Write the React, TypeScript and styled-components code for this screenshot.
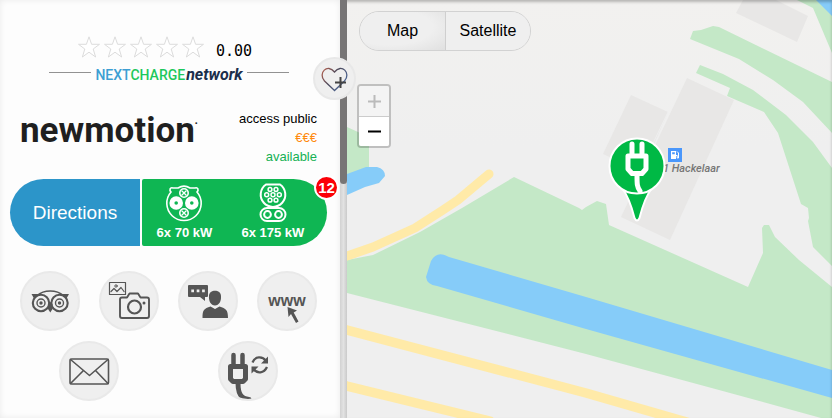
import React from "react";
import styled, { createGlobalStyle } from "styled-components";

const GlobalStyle = createGlobalStyle`
  *, *::before, *::after { box-sizing: border-box; }
  html, body, #root { height: 100%; margin: 0; }
  body { font-family: "Liberation Sans", Arial, sans-serif; overflow: hidden; }
  button { font: inherit; color: inherit; border: 0; padding: 0; margin: 0; cursor: pointer; }
  svg { display: block; }
`;

const Page = styled.div`
  position: relative;
  display: grid;
  grid-template-columns: 347px minmax(0, 1fr);
  height: 100vh;
  &::after {
    content: "";
    position: absolute;
    inset: 0;
    box-shadow: inset 0 2px 3px rgba(0, 0, 0, 0.25);
    pointer-events: none;
  }
`;

const Sidebar = styled.aside`
  position: relative;
  z-index: 1;
  display: grid;
  grid-template-columns: minmax(0, 1fr) 7px;
  min-height: 0;
  background: #fdfdfd;
`;

const Panel = styled.div`
  min-height: 0;
  overflow: hidden;
  padding: 36px 13px 0 10px;
  box-shadow: inset 0 0 6px rgba(0, 0, 0, 0.08);
`;

const ScrollTrack = styled.div`
  background: linear-gradient(90deg, #d2d2d2, #e2e2e2 50%, #cacaca);
`;

const ScrollThumb = styled.div`
  height: 44%;
  border-radius: 0 0 4px 4px;
  background: #777575;
`;

const Rating = styled.div`
  display: flex;
  align-items: flex-start;
  gap: 4px;
  height: 28px;
  padding-left: 68px;
`;

const Score = styled.span`
  margin: 4px 0 0 8px;
  font: 15px/22px "DejaVu Sans Mono", monospace;
  color: #000;
`;

const Network = styled.div`
  display: flex;
  align-items: flex-start;
  justify-content: center;
  gap: 4px;
  padding: 0 38px 0 39px;
  height: 20px;
  &::before, &::after {
    content: "";
    flex: 1;
    height: 1px;
    margin-top: 8px;
    background: #929292;
  }
`;

const NetworkName = styled.span`
  font: 500 14px/22px Roboto, sans-serif;
  color: #3d9fd3;
  white-space: nowrap;
`;
const Charge = styled.span`color: #1dc85c;`;
const NetworkWord = styled.em`
  margin-left: 1px;
  font-size: 16px;
  font-weight: 700;
  color: #1b2e4b;
`;

const Summary = styled.div`
  display: flex;
  justify-content: space-between;
  padding: 25px 10px 0;
  height: 95px;
`;

const Brand = styled.div`
  display: flex;
  font: 700 35px/43px Roboto, sans-serif;
  color: #1f1f1f;
`;
const Mark = styled.small`
  font-size: 8px;
  line-height: 30px;
`;

const Facts = styled.div`
  font-size: 13px;
  line-height: 19px;
  text-align: right;
`;
const Fact = styled.div<{ $color: string }>`color: ${(p) => p.$color};`;

const Actions = styled.div`
  position: relative;
  display: flex;
  gap: 2px;
  height: 67px;
`;

const Directions = styled.button`
  flex: 0 0 130px;
  border-radius: 34px 0 0 34px;
  background: #2c95c9;
  color: #fff;
  font-size: 19px;
`;

const Plugs = styled.button`
  flex: 1;
  display: flex;
  justify-content: space-around;
  padding: 4px 8px 0 0;
  border-radius: 2px 34px 34px 2px;
  background: #0fb653;
  color: #fff;
`;

const Plug = styled.span`
  display: flex;
  flex-direction: column;
  align-items: center;
  font-size: 13px;
  font-weight: 700;
  line-height: 20px;
  white-space: nowrap;
`;

const Badge = styled.span`
  position: absolute;
  top: -4px;
  right: -12px;
  width: 25px;
  height: 25px;
  border: 2px solid #fff;
  border-radius: 50%;
  background: #fb0007;
  color: #fff;
  font-size: 15px;
  font-weight: 700;
  line-height: 21px;
  text-align: center;
`;

const Links = styled.nav<{ $top: number }>`
  display: flex;
  justify-content: space-around;
  padding-top: ${(p) => p.$top}px;
`;

const RoundButton = styled.button`
  width: 60px;
  height: 60px;
  border: 2px solid #e9e9e9;
  border-radius: 50%;
  background: #efefef;
  color: #555;
  overflow: hidden;
  svg { width: 56px; height: 56px; }
`;

const Favourite = styled.button`
  position: absolute;
  top: 57px;
  right: -9px;
  width: 43px;
  height: 43px;
  border: 2px solid #e8e8e8;
  border-radius: 50%;
  background: #efefef;
  svg { width: 39px; height: 39px; }
`;

const MapArea = styled.main`
  position: relative;
  min-width: 0;
  overflow: hidden;
  background: #efefef;
`;

const Terrain = styled.svg`
  position: absolute;
  inset: 0;
  width: 100%;
  height: 100%;
`;

const MapControls = styled.div`
  position: absolute;
  top: 11px;
  left: 12px;
  display: flex;
  flex-direction: column;
  align-items: flex-start;
  gap: 33px;
`;

const MapTypes = styled.div`
  display: flex;
  height: 40px;
  border: 1px solid #d2d2d2;
  border-radius: 20px;
  overflow: hidden;
  background: #efefef;
`;

const MapType = styled.button<{ $active?: boolean }>`
  width: 85px;
  background: ${(p) => (p.$active ? "radial-gradient(ellipse at 35% 40%, #efefef 55%, #e0e0e0)" : "#efefef")};
  font-size: 16px;
  color: #000;
  & + & { border-left: 1px solid #cfcfcf; }
`;

const Zoom = styled.div`
  display: grid;
  width: 34px;
  margin-left: -2px;
  border: 2px solid rgba(0, 0, 0, 0.2);
  border-radius: 4px;
  background-clip: padding-box;
  overflow: hidden;
`;

const ZoomButton = styled.button`
  display: grid;
  place-items: center;
  height: 30px;
  background: #fff;
  color: #000;
  & + & { border-top: 1px solid #ccc; }
  &:disabled { background: #f4f4f4; color: #bbb; }
`;

const Pin = styled.button`
  position: absolute;
  top: 136px;
  left: 261px;
  background: none;
`;

const Place = styled.div`
  position: absolute;
  top: 148px;
  left: 316px;
  font: italic 500 11px/15px Roboto, sans-serif;
  color: #777;
  white-space: nowrap;
  svg { margin: 0 0 -1px 5px; }
`;

const stroke = { fill: "none", stroke: "currentColor", strokeLinecap: "round", strokeLinejoin: "round" } as const;

const Star = () => (
  <svg width="22" height="23" viewBox="0 0 22 23" aria-hidden="true">
    <path d="M11 .8 13.6 8.3H21.5L15.2 13 17.6 21 11 16.2 4.4 21 6.8 13 .5 8.3H8.4Z" fill="#fff" stroke="#dcdcdc" />
  </svg>
);

const CombinedRound = () => (
  <svg width="38" height="40" viewBox="0 0 38 40" fill="none" stroke="#fff" strokeWidth="1.6">
    <path d="M6 9C4 7 5 4 8 5L13 5C17 2.500 21 2.500 25 5L30 5C33 4 34 7 32 9A17.200 17.200 0 1 1 6 9Z" />
    <circle cx="19" cy="10" r="4.2" /><circle cx="19" cy="30" r="4.2" />
    <path d="m16.500 7.500 5 5m0-5-5 5m0 15 5 5m0-5-5 5" strokeWidth="1.3" />
    <circle cx="11.2" cy="20" r="4.300" strokeWidth="5" /><circle cx="26.8" cy="20" r="4.300" strokeWidth="5" />
  </svg>
);

const CombinedTall = () => (
  <svg width="38" height="40" viewBox="0 0 38 40" fill="none" stroke="#fff" strokeWidth="2">
    <path d="M12 1.500H26A12.300 12.300 0 1 1 12 1.500Z" />
    <rect x="6.500" y="25" width="25" height="13" rx="6.500" />
    <circle cx="13.500" cy="31.500" r="3.400" /><circle cx="24.500" cy="31.500" r="3.400" />
    <g strokeWidth="1.500">
      <circle cx="16" cy="6.500" r="1.900" /><circle cx="22" cy="6.500" r="1.900" />
      <circle cx="12.700" cy="11.800" r="2" /><circle cx="19" cy="11.800" r="2" /><circle cx="25.300" cy="11.800" r="2" />
      <circle cx="16" cy="17.200" r="1.900" /><circle cx="22" cy="17.200" r="1.900" />
    </g>
  </svg>
);

const Owl = () => (
  <svg viewBox="2 2 56 56">
    <g {...stroke} strokeWidth="2.100">
      <circle cx="21" cy="32" r="8.200" /><circle cx="39.500" cy="32" r="8.200" />
      <circle cx="21" cy="32" r="4" strokeWidth="1.400" /><circle cx="39.500" cy="32" r="4" strokeWidth="1.400" />
      <path d="M17 24.500C24 18.500 36.500 18.500 43.500 24.500" strokeWidth="1.500" />
    </g>
    <g fill="currentColor">
      <circle cx="21" cy="32" r="1.700" /><circle cx="39.500" cy="32" r="1.700" />
      <path d="M11.500 23H19L14 27.500ZM49 23H41.500L46.500 27.500ZM28 33 30.300 31 32.500 33 32.500 38 30.300 41.500 28 38Z" />
    </g>
  </svg>
);

const Photos = () => (
  <svg viewBox="2 2 56 56">
    <g {...stroke}>
      <path d="M10.500 11.500h16v12h-16ZM12 20.500l3-3 3 3 4-4 3 4" strokeWidth="1.200" />
      <circle cx="17" cy="15" r="1.200" strokeWidth="1" />
      <path d="M23 26.500H28L30.500 22.500H39L41.500 26.500H48Q50 26.500 50 28.500V45Q50 47 48 47H23Q21 47 21 45V28.500Q21 26.500 23 26.500Z" strokeWidth="1.900" />
      <circle cx="35.500" cy="36" r="6.500" strokeWidth="2.200" />
    </g>
    <circle cx="45" cy="32" r="1.500" fill="currentColor" />
  </svg>
);

const Chat = () => (
  <svg viewBox="2 2 56 56" fill="currentColor">
    <path fillRule="evenodd" d="M11 14H29Q30 14 30 15V25Q30 26 29 26H27V30L22 26H11Q10 26 10 25V15Q10 14 11 14ZM13.300 18.500v2.700h2.700v-2.700Zm5.400 0v2.700h2.700v-2.700Zm5.400 0v2.700h2.700v-2.700Z" />
    <path d="M31 25C31 18 43 18 43 25C43.500 30 41 34.500 37 34.500S30.500 30 31 25ZM24.500 47C24.500 39 26 37.500 32.500 35.500L37 38 41.500 35.500C48 37.500 50 39 50 47Z" />
  </svg>
);

const Website = () => (
  <svg viewBox="2 2 56 56" fill="currentColor">
    <text x="30" y="35" textAnchor="middle" fontFamily="Liberation Sans" fontWeight="700" fontSize="16">www</text>
    <path d="M30.500 36 40 39.500 36.700 41.500 41.500 50.500 39 52 34 43 31.500 46Z" />
  </svg>
);

const Mail = () => (
  <svg viewBox="2 2 56 56">
    <g {...stroke} strokeWidth="1.600">
      <rect x="11" y="18" width="38.500" height="25" rx="1.500" />
      <path d="M11.500 18.500 30.500 34.500 49 18.500M11.500 42.500 24.500 29.500M49 42.500 36.500 29.500" />
    </g>
  </svg>
);

const PlugRefresh = () => (
  <svg viewBox="2 2 56 56">
    <g {...stroke} strokeWidth="5">
      <path d="M15.500 14V24M24.500 14V24" strokeWidth="4.500" />
      <path d="M12.500 25.500H27.500V38L25 40.500H15L12.500 38Z" />
      <path d="M20 42C20 53 23 58 31 58.500" />
    </g>
    <g {...stroke} strokeWidth="2.300" strokeLinecap="butt">
      <path d="M34.500 21.500C37 15 44.500 15 48 20M49 26C46 32.500 39 33 35.500 28" />
    </g>
    <path d="M50 15.500V22.500H43ZM33.500 32.500V25.500H40.500Z" fill="currentColor" />
  </svg>
);

const HeartPlus = () => (
  <svg viewBox="0 0 39 39">
    <defs>
      <linearGradient id="heart" x1="0" x2="1" y1="0" y2="0.6">
        <stop offset="0" stopColor="#b5604e" /><stop offset="0.500" stopColor="#4d4a5c" /><stop offset="1" stopColor="#4a6698" />
      </linearGradient>
    </defs>
    <path d="M19.500 31.500 9.500 22C2.500 14 12.500 4 19.500 13 26.500 4 36.500 14 29.500 22Z" fill="none" stroke="url(#heart)" strokeWidth="1.300" />
    <path d="M25.500 18v11M20 23.500h11" stroke="#444" strokeWidth="2" />
  </svg>
);

const Landscape = () => (
  <Terrain viewBox="347 0 485 418" preserveAspectRatio="xMidYMid slice" aria-hidden="true">
    <defs>
      <linearGradient id="haze" x1="0" y1="0" x2="0" y2="1">
        <stop offset="0" stopColor="#f2f1ef" /><stop offset="0.350" stopColor="#efefef" />
      </linearGradient>
    </defs>
    <rect x="347" width="485" height="418" fill="url(#haze)" />
    <g fill="#e8e7e6">
      <path d="M743 0H776L808 16 797 42 736 13Z" />
      <path d="M631 95 668 112 642 172 603 154Z" />
      <path d="M687 78 734 100 670 240 621 217Z" />
    </g>
    <path d="M668 112 645 160" stroke="#efefef" />
    <g fill="#c4e8c7">
      <path d="M347 127 369 137V167L347 176Z" />
      <path d="M514 177 579 208 582 210 586 207 597 201 606 204 609 225 748 287 763 253 762 228 764 225H769L775 237 799 260 832 287V421L719 390 586 354 347 293V260L373 255 420 232 462 208Z" />
      <path d="M690 39 693 31 701 30 713 26 719 27 832 82V133L803 102 773 80 739 59Z" />
      <path d="M696 73 700 65 723 74 753 90 786 115 813 142 832 168V266L813 247 808 221 809 218 808 208 801 204 778 133 764 112 727 96 730 88Z" />
      <path d="M797 0H832V53L813 8Z" />
    </g>
    <g fill="#86ccf9">
      <path d="M816 0H832V16Z" />
      <path d="M347 174 366 167H377Q385 169 385 176L379 183 365 187 347 195Z" />
      <path d="M449 257 586 297 832 370V398L586 329 437 286Q427 285 426 277L431 261Q437 250 449 257Z" />
    </g>
    <g fill="none" stroke="#ffeaa8" strokeWidth="9" strokeLinecap="round" strokeLinejoin="round">
      <path d="M340 258 347 256 373 247 415 228 443 210 458 200 489 174" />
      <path d="M340 328 347 330 586 393 690 423M340 384 347 386 490 421" strokeWidth="9.500" />
    </g>
  </Terrain>
);

const PinDrawing = () => (
  <svg width="58" height="86" viewBox="0 0 58 86">
    <path d="M14 52C21 61 24 72 26.500 82Q29 87 31.500 82C34 72 37 61 44 52Z" fill="#00b945" stroke="#fff" strokeWidth="2" strokeLinejoin="round" />
    <circle cx="29" cy="30" r="27.500" fill="#00b945" stroke="#fff" strokeWidth="2" />
    <g fill="none" stroke="#fff" strokeWidth="5" strokeLinecap="round" strokeLinejoin="round">
      <path d="M24 8V18M34 8V18" />
      <path d="M20 20H38V33L34 37.500H24L20 33Z" />
      <path d="M29 39C29 48 29 51 32 55" />
    </g>
  </svg>
);

export default function App() {
  return (
    <>
      <GlobalStyle />
      <Page>
        <Sidebar>
          <Panel>
            <Rating aria-label="Rating">
              {[1, 2, 3, 4, 5].map((n) => <Star key={n} />)}
              <Score>0.00</Score>
            </Rating>
            <Network>
              <NetworkName>NEXT<Charge>CHARGE</Charge><NetworkWord>network</NetworkWord></NetworkName>
            </Network>
            <Summary>
              <Brand>newmotion<Mark>•</Mark></Brand>
              <Facts>
                <Fact $color="#000">access public</Fact>
                <Fact $color="#ff8a0d">€€€</Fact>
                <Fact $color="#16b155">available</Fact>
              </Facts>
            </Summary>
            <Actions>
              <Directions type="button">Directions</Directions>
              <Plugs type="button">
                <Plug><CombinedRound />6x 70 kW</Plug>
                <Plug><CombinedTall />6x 175 kW</Plug>
              </Plugs>
              <Badge>12</Badge>
            </Actions>
            <Links $top={25} aria-label="Station links">
              <RoundButton type="button" aria-label="Reviews"><Owl /></RoundButton>
              <RoundButton type="button" aria-label="Photos"><Photos /></RoundButton>
              <RoundButton type="button" aria-label="Comments"><Chat /></RoundButton>
              <RoundButton type="button" aria-label="Website"><Website /></RoundButton>
            </Links>
            <Links $top={10} aria-label="Station tools">
              <RoundButton type="button" aria-label="Send mail"><Mail /></RoundButton>
              <RoundButton type="button" aria-label="Update status"><PlugRefresh /></RoundButton>
            </Links>
          </Panel>
          <ScrollTrack><ScrollThumb /></ScrollTrack>
          <Favourite type="button" aria-label="Add to favourites"><HeartPlus /></Favourite>
        </Sidebar>
        <MapArea>
          <Landscape />
          <Place>
            <svg width="14" height="14" viewBox="0 0 14 14">
              <path d="M0 0h14v14H0Z" fill="#4a97fb" />
              <path fillRule="evenodd" d="M3 3h5v8H3ZM4.200 4.200v2h2.600v-2Z" fill="#fff" />
              <path d="M8 7.500h1.200V10h1.300V5L9 3.500" fill="none" stroke="#fff" />
            </svg>
            1 Hackelaar
          </Place>
          <Pin type="button" aria-label="Charging station"><PinDrawing /></Pin>
          <MapControls>
            <MapTypes>
              <MapType type="button" $active>Map</MapType>
              <MapType type="button">Satellite</MapType>
            </MapTypes>
            <Zoom>
              <ZoomButton type="button" aria-label="Zoom in" disabled>
                <svg width="13" height="13" viewBox="0 0 13 13"><path d="M6.500 0v13M0 6.500h13" stroke="currentColor" strokeWidth="2" /></svg>
              </ZoomButton>
              <ZoomButton type="button" aria-label="Zoom out">
                <svg width="13" height="13" viewBox="0 0 13 13"><path d="M0 6.500h13" stroke="currentColor" strokeWidth="2" /></svg>
              </ZoomButton>
            </Zoom>
          </MapControls>
        </MapArea>
      </Page>
    </>
  );
}
